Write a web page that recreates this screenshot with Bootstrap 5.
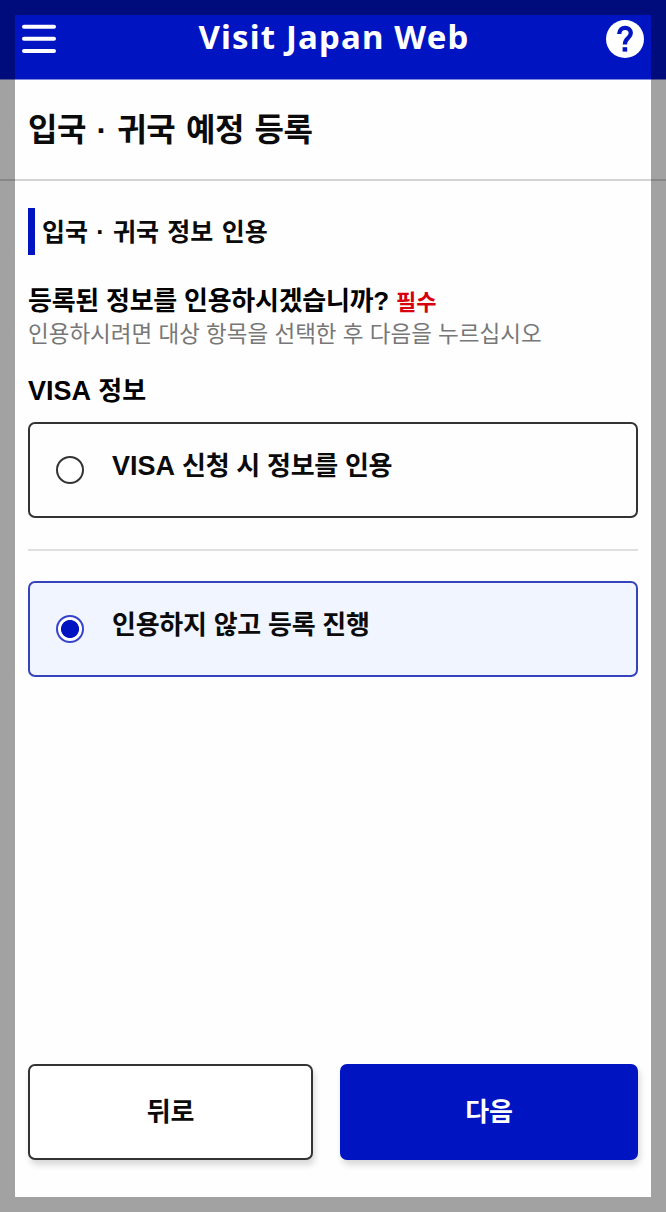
<!DOCTYPE html>
<html lang="ko">
<head>
<meta charset="utf-8">
<meta name="viewport" content="width=device-width, initial-scale=1">
<title>Visit Japan Web</title>
<link href="https://cdn.jsdelivr.net/npm/bootstrap@5.3.0/dist/css/bootstrap.min.css" rel="stylesheet">
<style>
  :root { --vjw-blue: #0014c1; }
  body { font-family: "Liberation Sans", "Noto Sans CJK KR", sans-serif; color: #0b0b0b; background: #fefefe; }
  .screen { height: 1212px; overflow: hidden; }
  .screen-frame { position: fixed; inset: 0; border: 15px solid rgba(0,0,0,.36); pointer-events: none; z-index: 20; }
  .topbar { height: 80px; background: var(--vjw-blue); border-bottom: 1px solid #8289dd; padding: 0 22px 2px; }
  .brand { font: 700 33px/40px "Noto Sans", sans-serif; letter-spacing: 1.15px; margin-bottom: 4px; padding-left: 4px; }
  .page-title { height: 101px; border-bottom: 2px solid #d3d3d3; padding: 0 28px; }
  .page-title h1 { font-size: 32px; line-height: 40px; font-weight: 700; letter-spacing: -.4px; word-spacing: 2px; }
  .content { padding: 27px 28px 0; }
  .section-title { height: 47px; border-left: 7px solid var(--vjw-blue); padding-left: 7px; }
  .section-title h2 { font-size: 25px; line-height: 32px; font-weight: 700; word-spacing: 1.4px; }
  .question { font-size: 26px; line-height: 32px; font-weight: 700; letter-spacing: -.25px; margin-top: 30px; color: #000; }
  .required { font-size: 22px; letter-spacing: 0; color: #d9000d; }
  .hint { font-size: 22.5px; line-height: 32px; color: #777; }
  .group-title { font-size: 26px; line-height: 32px; font-weight: 700; margin-top: 24px; color: #000; }
  .latin { font-size: 27px; letter-spacing: 0; }
  .choice { height: 96px; border: 2px solid #333; border-radius: 7px; padding-left: 26px; gap: 28px; }
  .group-title + .choice { margin-top: 15px; }
  .choice.active { border-color: #3544bd; background: #f1f5ff; }
  .choice .form-check-input { width: 28px; height: 28px; border: 2px solid #333; background: #fff; box-shadow: none; }
  .choice .form-check-input:checked { border-color: #3544c8; background: radial-gradient(circle, var(--vjw-blue) 8.6px, #fff 9.4px); }
  .choice-text { font-size: 26px; line-height: 32px; font-weight: 700; letter-spacing: -.25px; margin-bottom: 8px; }
  .rule { height: 2px; background: #dfdfdf; margin: 31px 0 30px; }
  .actions { padding: 0 28px; margin-bottom: 52px; gap: 27px; }
  .actions .btn { height: 96px; border-radius: 7px; font-size: 26px; font-weight: 700; letter-spacing: -.25px; box-shadow: 2px 5px 6px rgba(0,0,0,.15); }
  .btn-back { width: 285px; border: 2px solid #333; background: #fff; color: #0b0b0b; }
  .btn-next { background: var(--vjw-blue); color: #fff; border: 0; }
</style>
</head>
<body>
<div class="screen d-flex flex-column">
  <header class="topbar d-flex align-items-center justify-content-between text-white">
    <svg width="36" height="30" viewBox="0 0 36 30" stroke="#fff" stroke-width="4" stroke-linecap="round" aria-label="Menu"><path d="M2 2.7H32M2 14.7H32M2 27H32"/></svg>
    <div class="brand">Visit Japan Web</div>
    <svg width="38" height="38" viewBox="0 0 38 38" aria-label="Help"><circle cx="19" cy="19" r="19" fill="#fff"/><path d="M13.2 14C13.4 5.8 24.8 6 24.8 13C24.8 18.2 18.9 18 18.9 24.4" fill="none" stroke="#0014c1" stroke-width="4.3"/><path d="M16.6 27.2H21.2V31.6H16.6Z" fill="#0014c1"/></svg>
  </header>
  <div class="page-title d-flex align-items-center"><h1 class="mb-0">입국 · 귀국 예정 등록</h1></div>
  <main class="content flex-grow-1">
    <div class="section-title d-flex align-items-center"><h2 class="mb-0">입국 · 귀국 정보 인용</h2></div>
    <div class="question">등록된 정보를 인용하시겠습니까? <span class="required">필수</span></div>
    <div class="hint">인용하시려면 대상 항목을 선택한 후 다음을 누르십시오</div>
    <div class="group-title"><span class="latin">VISA</span> 정보</div>
    <label class="choice d-flex align-items-center">
      <input class="form-check-input m-0" type="radio" name="quote">
      <span class="choice-text"><span class="latin">VISA</span> 신청 시 정보를 인용</span>
    </label>
    <div class="rule"></div>
    <label class="choice active d-flex align-items-center">
      <input class="form-check-input m-0" type="radio" name="quote" checked>
      <span class="choice-text">인용하지 않고 등록 진행</span>
    </label>
  </main>
  <div class="actions d-flex">
    <button class="btn btn-back" type="button">뒤로</button>
    <button class="btn btn-next flex-grow-1" type="button">다음</button>
  </div>
</div>
<div class="screen-frame"></div>
<script src="https://cdn.jsdelivr.net/npm/bootstrap@5.3.0/dist/js/bootstrap.bundle.min.js"></script>
</body>
</html>
